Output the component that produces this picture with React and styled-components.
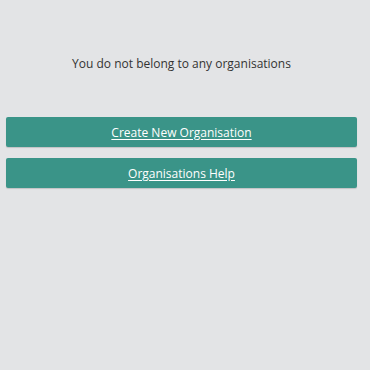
import React from 'react';
import styled, {createGlobalStyle} from 'styled-components';

const GlobalStyle = createGlobalStyle`
  html, body {
    margin: 0;
    padding: 0;
    background: #e3e4e6;
    height: 100%;
  }
  body {
    font-family: "Open Sans", "Liberation Sans", sans-serif;
  }
`

const Page = styled.div`
  width: 351px;
  margin-left: 6px;
  padding-top: 55px;
  display: flex;
  flex-direction: column;
`

const Message = styled.p`
  margin: 0 0 44px;
  text-align: center;
  font-size: 12px;
  line-height: 18px;
  color: #333333;
`

const ButtonList = styled.div`
  display: flex;
  flex-direction: column;
  gap: 11px;
`

const ActionButton = styled.a`
  display: flex;
  align-items: center;
  justify-content: center;
  height: 30px;
  background: #3a9488;
  border-radius: 2px;
  box-shadow: 0 1px 1px rgba(0, 0, 0, 0.15);
  color: #ffffff;
  font-size: 12px;
  text-decoration: underline;
  text-underline-offset: 2px;
  cursor: pointer;
`

const App = () => {
    return (
        <>
            <GlobalStyle/>
            <Page>
                <Message>You do not belong to any organisations</Message>
                <ButtonList>
                    <ActionButton>Create New Organisation</ActionButton>
                    <ActionButton>Organisations Help</ActionButton>
                </ButtonList>
            </Page>
        </>
    );
};

export default App;
